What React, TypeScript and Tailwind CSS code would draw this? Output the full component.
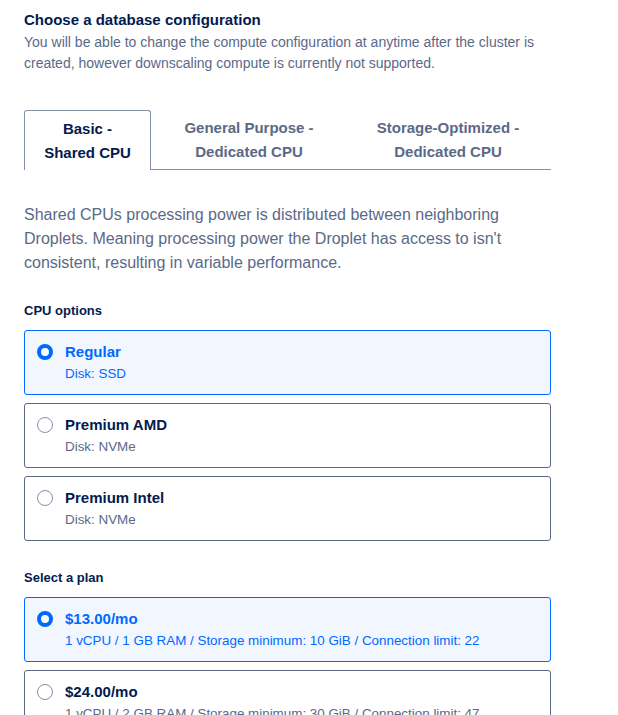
import React from "react";

const Radio = ({ checked }: { checked: boolean }) =>
  checked ? (
    <span className="box-border block h-[16px] w-[16px] shrink-0 rounded-full border-[4px] border-[#0069ff] bg-white" />
  ) : (
    <span className="box-border block h-[16px] w-[16px] shrink-0 rounded-full border border-[#8690a8] bg-white" />
  );

const Option = ({
  title,
  sub,
  checked,
}: {
  title: string;
  sub: string;
  checked?: boolean;
}) => (
  <div
    className={
      checked
        ? "flex h-[65px] items-start gap-[12px] rounded-[3px] border border-[#0069ff] bg-[#f2f7ff] px-[12px] pt-[11px]"
        : "flex h-[65px] items-start gap-[12px] rounded-[3px] border border-[#5b6987] bg-white px-[12px] pt-[11px]"
    }
  >
    <div className="pt-[2px]">
      <Radio checked={!!checked} />
    </div>
    <div className="flex flex-col">
      <span
        className={
          checked
            ? "text-[15px] font-bold leading-[20px] text-[#0069ff]"
            : "text-[15px] font-bold leading-[20px] text-[#031b4e]"
        }
      >
        {title}
      </span>
      <span
        className={
          checked
            ? "mt-[3px] text-[13.4px] leading-[18px] text-[#0069ff]"
            : "mt-[3px] text-[13.4px] leading-[18px] text-[#5b6987]"
        }
      >
        {sub}
      </span>
    </div>
  </div>
);

export default function App() {
  return (
    <div
      className="h-[715px] w-[618px] overflow-hidden bg-white pl-[24px] pt-[10px]"
      style={{ fontFamily: '"Liberation Sans", Arial, sans-serif' }}
    >
      <div className="w-[527px]">
        <h2 className="text-[15px] font-bold leading-[20px] text-[#031b4e]">
          Choose a database configuration
        </h2>
        <p className="mt-[2px] text-[14px] leading-[21px] text-[#5b6987]">
          You will be able to change the compute configuration at anytime after the cluster is
          created, however downscaling compute is currently not supported.
        </p>

        <div className="mt-[36px] flex h-[60px] items-stretch">
          <div className="flex w-[127px] flex-col items-center justify-center rounded-t-[3px] border border-b-0 border-[#8690a8] text-[15px] font-semibold leading-[24px] text-[#031b4e]">
            <span>Basic -</span>
            <span>Shared CPU</span>
          </div>
          <div className="flex flex-1 border-b border-[#8690a8]">
            <div className="flex w-[196px] flex-col items-center justify-center text-[15px] font-semibold leading-[24px] text-[#5b6987]">
              <span>General Purpose -</span>
              <span>Dedicated CPU</span>
            </div>
            <div className="flex w-[202px] flex-col items-center justify-center text-[15px] font-semibold leading-[24px] text-[#5b6987]">
              <span>Storage-Optimized -</span>
              <span>Dedicated CPU</span>
            </div>
          </div>
        </div>

        <p className="mt-[33px] text-[16px] leading-[24px] text-[#5b6987]">
          Shared CPUs processing power is distributed between neighboring Droplets. Meaning
          processing power the Droplet has access to isn't consistent, resulting in variable
          performance.
        </p>

        <h3 className="mt-[27px] text-[13px] font-bold leading-[18px] text-[#031b4e]">
          CPU options
        </h3>
        <div className="mt-[10px] flex flex-col gap-[8px]">
          <Option title="Regular" sub="Disk: SSD" checked />
          <Option title="Premium AMD" sub="Disk: NVMe" />
          <Option title="Premium Intel" sub="Disk: NVMe" />
        </div>

        <h3 className="mt-[28px] text-[13px] font-bold leading-[18px] text-[#031b4e]">
          Select a plan
        </h3>
        <div className="mt-[10px] flex flex-col gap-[8px]">
          <Option
            title="$13.00/mo"
            sub="1 vCPU / 1 GB RAM / Storage minimum: 10 GiB / Connection limit: 22"
            checked
          />
          <Option
            title="$24.00/mo"
            sub="1 vCPU / 2 GB RAM / Storage minimum: 30 GiB / Connection limit: 47"
          />
        </div>
      </div>
    </div>
  );
}
